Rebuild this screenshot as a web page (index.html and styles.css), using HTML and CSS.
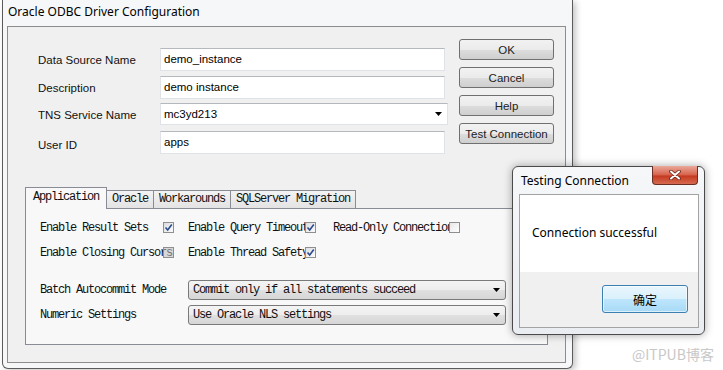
FILE: index.html
```html
<!DOCTYPE html>
<html lang="en">
<head>
  <meta charset="UTF-8">
  <title>Oracle ODBC Driver Configuration</title>
  <link rel="stylesheet" href="styles.css">
</head>
<body>

  <div class="window">
    <div class="title-bar">Oracle ODBC Driver Configuration</div>

    <div class="client">
      <div class="top-section">
        <div class="dsn-form">
          <span class="field-label">Data Source Name</span>
          <div class="textbox">demo_instance</div>

          <span class="field-label">Description</span>
          <div class="textbox">demo instance</div>

          <span class="field-label">TNS Service Name</span>
          <div class="combo">
            <span>mc3yd213</span>
            <svg class="arrow" width="7" height="4" viewBox="0 0 7 4"><polygon points="0,0 7,0 3.5,4" fill="#000"/></svg>
          </div>

          <span class="field-label low">User ID</span>
          <div class="textbox">apps</div>
        </div>

        <div class="button-column">
          <button class="win-btn">OK</button>
          <button class="win-btn">Cancel</button>
          <button class="win-btn">Help</button>
          <button class="win-btn">Test Connection</button>
        </div>
      </div>

      <div class="tab-control">
        <div class="tab-strip">
          <span class="tab active">Application</span>
          <span class="tab">Oracle</span>
          <span class="tab">Workarounds</span>
          <span class="tab">SQLServer Migration</span>
        </div>

        <div class="tab-panel">
          <div class="option-grid">
            <div class="option">
              <span class="option-label lbl-a">Enable Result Sets</span>
              <span class="checkbox"><svg width="9" height="9" viewBox="0 0 9 9"><path d="M1.5 4.5 L3.7 7 L7.8 1.5" fill="none" stroke="#2d4a8c" stroke-width="1.6"/></svg></span>
            </div>
            <div class="option">
              <span class="option-label lbl-b">Enable Query Timeout</span>
              <span class="checkbox"><svg width="9" height="9" viewBox="0 0 9 9"><path d="M1.5 4.5 L3.7 7 L7.8 1.5" fill="none" stroke="#2d4a8c" stroke-width="1.6"/></svg></span>
            </div>
            <div class="option">
              <span class="option-label lbl-c">Read-Only Connection</span>
              <span class="checkbox empty"></span>
            </div>
            <div class="option">
              <span class="option-label lbl-a">Enable Closing Cursors</span>
              <span class="checkbox dim"></span>
            </div>
            <div class="option">
              <span class="option-label lbl-b">Enable Thread Safety</span>
              <span class="checkbox"><svg width="9" height="9" viewBox="0 0 9 9"><path d="M1.5 4.5 L3.7 7 L7.8 1.5" fill="none" stroke="#2d4a8c" stroke-width="1.6"/></svg></span>
            </div>
          </div>

          <div class="setting-grid">
            <span>Batch Autocommit Mode</span>
            <div class="select-box">
              <span>Commit only if all statements succeed</span>
              <svg class="arrow" width="7" height="4" viewBox="0 0 7 4"><polygon points="0,0 7,0 3.5,4" fill="#000"/></svg>
            </div>

            <span>Numeric Settings</span>
            <div class="select-box">
              <span>Use Oracle NLS settings</span>
              <svg class="arrow" width="7" height="4" viewBox="0 0 7 4"><polygon points="0,0 7,0 3.5,4" fill="#000"/></svg>
            </div>
          </div>
        </div>
      </div>
    </div>
  </div>

  <!-- Message box over the dialog -->
  <div class="msgbox">
    <div class="msgbox-title">Testing Connection</div>
    <div class="close-btn">
      <svg width="12" height="10" viewBox="0 0 12 10">
        <path d="M2 1.5 L10 8.5 M10 1.5 L2 8.5" stroke="#6b2417" stroke-width="3.6" stroke-linecap="round"/>
        <path d="M2 1.5 L10 8.5 M10 1.5 L2 8.5" stroke="#fff" stroke-width="2" stroke-linecap="round"/>
      </svg>
    </div>
    <div class="msgbox-body">
      <div class="msgbox-content">Connection successful</div>
      <div class="msgbox-footer">
        <button class="msgbox-btn">确定</button>
      </div>
    </div>
  </div>

  <div class="watermark">@ITPUB博客</div>

</body>
</html>
```

FILE: styles.css
```css
/* General Styles */
body {
  margin: 0;
  width: 723px;
  height: 370px;
  overflow: hidden;
  position: relative;
  background: #fff;
  font-family: "Liberation Sans", Arial, sans-serif;
  font-size: 11px;
  color: #000;
}

/* Main dialog window */
.window {
  width: 571px;
  height: 369px;
  margin-left: 2px;
  box-sizing: border-box;
  border: 1px solid #5b5b5b;
  border-top: none;
  border-radius: 0 0 6px 6px;
  padding: 0 6px 5px 4px;
  background: #f6f7f8;
  box-shadow: 3px 2px 6px rgba(0, 0, 0, 0.22);
  display: flex;
  flex-direction: column;
}

.title-bar {
  height: 26px;
  padding-left: 1px;
  font-family: "Noto Sans", sans-serif;
  font-size: 12px;
  line-height: 24px;
}

.client {
  height: 337px;
  box-sizing: border-box;
  border: 1px solid #8d8d8d;
  background: #f0f0f0;
}

/* Top fields and buttons */
.top-section {
  display: flex;
  height: 160px;
  box-sizing: border-box;
  padding: 12px 0 0 30px;
}

.dsn-form {
  display: grid;
  grid-template-columns: 122px 288px;
  grid-template-rows: 23px 23px 22px 23px;
  row-gap: 5px;
  margin-top: 9px;
  align-items: center;
}

.field-label {
  font-size: 11.5px;
  color: #111;
}

.field-label.low {
  padding-top: 4px;
}

.textbox {
  width: 285px;
  height: 23px;
  box-sizing: border-box;
  border: 1px solid #dfe2e6;
  border-top-color: #b5b8bd;
  background: #fff;
  padding-left: 3px;
  line-height: 21px;
  font-size: 11.5px;
}

.combo {
  height: 22px;
  margin-top: -2px;
  box-sizing: border-box;
  border: 1px solid #dfe2e6;
  border-top-color: #b5b8bd;
  background: #fff;
  padding: 0 5px 0 3px;
  display: flex;
  align-items: center;
  justify-content: space-between;
  font-size: 11.5px;
}

.button-column {
  display: flex;
  flex-direction: column;
  gap: 7px;
  margin-left: 11px;
}

.win-btn {
  width: 95px;
  height: 21px;
  padding: 0;
  border: 1px solid #707070;
  border-radius: 3px;
  background: linear-gradient(#f2f2f2 0%, #ebebeb 50%, #dddddd 51%, #cfcfcf 100%);
  font-family: "Liberation Sans", Arial, sans-serif;
  font-size: 11.5px;
  font-weight: normal;
  color: #222;
}

/* Tab control */
.tab-control {
  width: 523px;
  margin-left: 17px;
  font-family: "Liberation Mono", monospace;
  font-size: 12px;
  letter-spacing: -1.2px;
  color: #111;
}

.tab-strip {
  display: flex;
  align-items: flex-end;
  height: 21px;
}

.tab {
  height: 18px;
  box-sizing: border-box;
  border-top: 1px solid #898c95;
  border-right: 1px solid #898c95;
  padding: 0 5px;
  line-height: 17px;
  background: linear-gradient(#f3f3f3, #e3e3e3);
  white-space: nowrap;
}

.tab.active {
  height: 22px;
  margin-bottom: -1px;
  border-left: 1px solid #898c95;
  padding: 0 7px;
  line-height: 19px;
  background: #f8f8f8;
  position: relative;
  z-index: 1;
}

.tab-panel {
  height: 137px;
  box-sizing: border-box;
  border: 1px solid #898c95;
  background: #f8f8f8;
  padding: 6px 0 0 14px;
}

.option-grid {
  display: grid;
  grid-template-columns: 148px 145px auto;
  grid-auto-rows: 25px;
  align-items: center;
}

.option {
  display: flex;
  align-items: center;
}

.option-label {
  flex-shrink: 0;
  white-space: nowrap;
  padding-top: 1px;
}

.lbl-a { width: 123px; }
.lbl-b { width: 117px; }
.lbl-c { width: 116px; }

.checkbox {
  width: 11px;
  height: 11px;
  box-sizing: border-box;
  border: 1px solid #8f8f8f;
  background: linear-gradient(135deg, #dadde2, #fbfbfb);
  display: flex;
  align-items: center;
  justify-content: center;
}

.checkbox.empty {
  background: linear-gradient(135deg, #e6e6e6, #ffffff);
}

.checkbox.dim {
  background: rgba(190, 190, 190, 0.55);
}

.setting-grid {
  display: grid;
  grid-template-columns: 148px 318px;
  grid-auto-rows: 20px;
  row-gap: 5px;
  margin-top: 15px;
  align-items: center;
}

.select-box {
  height: 20px;
  box-sizing: border-box;
  border: 1px solid #7a7a7a;
  border-radius: 3px;
  background: linear-gradient(#f4f4f4 0%, #ededed 50%, #e0e0e0 51%, #d6d6d6 100%);
  padding: 0 5px 0 4px;
  display: flex;
  align-items: center;
  justify-content: space-between;
  white-space: nowrap;
}

/* Message box */
.msgbox {
  position: absolute;
  left: 512px;
  top: 166px;
  width: 193px;
  height: 169px;
  box-sizing: border-box;
  border: 1px solid #4a4a4a;
  border-radius: 6px;
  background: linear-gradient(#f5f7f9, #eaedf1);
  padding: 0 5px 6px 6px;
  box-shadow: 0 0 8px rgba(0, 0, 0, 0.35);
  display: flex;
  flex-direction: column;
  font-family: "Noto Sans", sans-serif;
  font-size: 12px;
}

.msgbox-title {
  height: 27px;
  padding-left: 2px;
  line-height: 27px;
}

.close-btn {
  position: absolute;
  top: -1px;
  right: 6px;
  width: 46px;
  height: 19px;
  box-sizing: border-box;
  border: 1px solid #6a2e22;
  border-top: none;
  border-radius: 0 0 4px 4px;
  background: linear-gradient(#eaa99b 0%, #d6614a 50%, #c4391f 55%, #d56a50 100%);
  display: flex;
  align-items: center;
  justify-content: center;
}

.msgbox-body {
  height: 134px;
  box-sizing: border-box;
  border: 1px solid #a3a3a3;
  display: flex;
  flex-direction: column;
}

.msgbox-content {
  height: 77px;
  box-sizing: border-box;
  background: #fff;
  padding: 30px 0 0 12px;
  line-height: 16px;
}

.msgbox-footer {
  flex: 1;
  background: #f0f0f0;
  display: flex;
  justify-content: flex-end;
  align-items: flex-start;
  padding: 13px 10px 0 0;
}

.msgbox-btn {
  width: 86px;
  height: 28px;
  padding: 0;
  border: 1px solid #3c7fb1;
  border-radius: 3px;
  background: linear-gradient(#eaf6fd 0%, #d9f0fc 50%, #bee6fd 51%, #a7d9f5 100%);
  box-shadow: inset 0 0 0 1px rgba(255, 255, 255, 0.6);
  font-family: "Noto Sans CJK SC", sans-serif;
  font-size: 12px;
  color: #000;
}

.watermark {
  position: absolute;
  left: 632px;
  top: 345px;
  color: #c8c8c8;
  font-family: "Noto Sans CJK SC", sans-serif;
  font-size: 14px;
  line-height: 18px;
}
```
